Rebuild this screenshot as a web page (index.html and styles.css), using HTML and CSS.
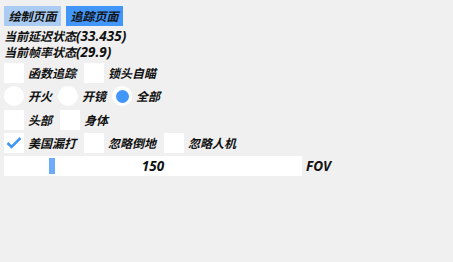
FILE: index.html
```html
<!DOCTYPE html>
<html>
<head>
<meta charset="utf-8">
<link rel="stylesheet" href="styles.css">
</head>
<body>
<div class="panel">
  <div class="tabs">
    <div class="btn btn-light">绘制页面</div>
    <div class="btn btn-dark">追踪页面</div>
  </div>
  <div class="info">
    <div class="line">当前延迟状态<span class="num">(33.435)</span></div>
    <div class="line">当前帧率状态<span class="num">(29.9)</span></div>
  </div>
  <div class="rows">
    <div class="row">
      <div class="item"><span class="box"></span><span class="label">函数追踪</span></div>
      <div class="item"><span class="box"></span><span class="label">锁头自瞄</span></div>
    </div>
    <div class="row row-radio">
      <div class="item"><span class="radio"></span><span class="label">开火</span></div>
      <div class="item"><span class="radio"></span><span class="label">开镜</span></div>
      <div class="item"><span class="radio on"><span class="dot"></span></span><span class="label">全部</span></div>
    </div>
    <div class="row">
      <div class="item"><span class="box"></span><span class="label">头部</span></div>
      <div class="item"><span class="box"></span><span class="label">身体</span></div>
    </div>
    <div class="row">
      <div class="item"><span class="box"><svg class="check" viewBox="0 0 20 20" width="20" height="20"><polyline points="3.5,10 7.5,14 16.5,5" fill="none" stroke="#4296fa" stroke-width="2.6" stroke-linecap="butt" stroke-linejoin="miter"/></svg></span><span class="label">美国漏打</span></div>
      <div class="item"><span class="box"></span><span class="label">忽略倒地</span></div>
      <div class="item"><span class="box"></span><span class="label">忽略人机</span></div>
    </div>
    <div class="row">
      <div class="slider"><span class="grab" style="left: 45px"></span><span class="value num">150</span></div>
      <span class="label num">FOV</span>
    </div>
  </div>
</div>
</body>
</html>
```
FILE: styles.css
```css
html, body {
  margin: 0;
  padding: 0;
  background: #f0f0f0;
  width: 453px;
  height: 262px;
  overflow: hidden;
}
.panel {
  padding: 6px 4px;
  font-family: "Noto Sans CJK SC", "Noto Sans", sans-serif;
  font-style: italic;
  font-weight: 700;
  font-size: 12px;
  color: #111;
}
.num {
  font-family: "Noto Sans", "Noto Sans CJK SC", sans-serif;
  font-size: 13.5px;
}
.tabs {
  display: flex;
  gap: 5px;
  height: 20px;
}
.btn {
  height: 20px;
  line-height: 20px;
  padding: 0 4.5px;
}
.btn-light { background: #aaccf4; }
.btn-dark { background: #4296fa; }
.info {
  margin-top: 2px;
}
.line {
  height: 16px;
  line-height: 16px;
}
.rows {
  margin-top: 3px;
  display: flex;
  flex-direction: column;
  gap: 3.3px;
}
.row {
  display: flex;
  align-items: center;
  gap: 8px;
  height: 20px;
}
.row-radio {
  gap: 6px;
}
.item {
  display: flex;
  align-items: center;
  gap: 4px;
}
.box {
  width: 20px;
  height: 20px;
  background: #fff;
  display: block;
}
.check {
  display: block;
}
.radio {
  width: 20px;
  height: 20px;
  border-radius: 50%;
  background: #fff;
  display: flex;
  align-items: center;
  justify-content: center;
}
.radio .dot {
  width: 13px;
  height: 13px;
  border-radius: 50%;
  background: #4296fa;
}
.label {
  line-height: 20px;
  white-space: nowrap;
}
.slider {
  position: relative;
  width: 298px;
  height: 20px;
  background: #fff;
  display: flex;
  align-items: center;
  justify-content: center;
  margin-right: -4px;
}
.grab {
  position: absolute;
  top: 2px;
  bottom: 2px;
  width: 6px;
  background: #6cadfb;
}
.value {
  line-height: 20px;
}
```
